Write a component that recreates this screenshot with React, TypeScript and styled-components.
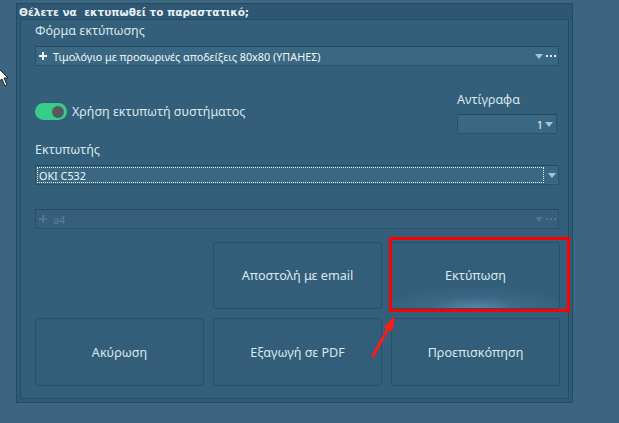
import React from 'react';
import styled, { createGlobalStyle } from 'styled-components';

const GlobalStyle = createGlobalStyle`
  html, body {
    margin: 0;
    padding: 0;
    background: #3c6580;
    font-family: "Noto Sans", "DejaVu Sans", sans-serif;
    color: #dde8ef;
  }
`;

const Page = styled.div`
  position: relative;
  width: 619px;
  height: 423px;
  overflow: hidden;
  padding: 3px 0 0 16px;
  box-sizing: border-box;
`;

const Window = styled.div`
  width: 557px;
  height: 400px;
  box-sizing: border-box;
  border: 1px solid #234b64;
  background: #305b76;
  display: flex;
  flex-direction: column;
`;

const TitleBar = styled.div`
  height: 15px;
  padding-left: 2px;
  display: flex;
  align-items: center;
  font-family: "DejaVu Sans", sans-serif;
  font-weight: bold;
  font-size: 10.5px;
  color: #e8f0f5;
  background: #2d5772;
  white-space: pre;
`;

const Panel = styled.div`
  flex: 1;
  margin: 0 3px 3px 3px;
  border: 1px solid #244c65;
  background: #335f7a;
  padding: 3px 9px 0 14px;
  display: flex;
  flex-direction: column;
`;

const Label = styled.div<{ $mt?: number }>`
  font-size: 12.5px;
  line-height: 16px;
  color: #dbe7ee;
  margin-top: ${p => p.$mt ?? 0}px;
`;

const Combo = styled.div<{ $disabled?: boolean; $mt: number }>`
  height: 20px;
  margin-top: ${p => p.$mt}px;
  box-sizing: border-box;
  border: 1px solid #2a516a;
  border-top-color: #23485f;
  background: ${p => (p.$disabled ? '#365f79' : '#3a6782')};
  display: flex;
  align-items: center;
  padding: 0 2px 0 3px;
  font-size: 10.8px;
  color: ${p => (p.$disabled ? '#5b8098' : '#f2f6f9')};
`;

const ComboText = styled.span`
  flex: 1;
  white-space: nowrap;
`;

const Ellipsis = styled.span<{ $disabled?: boolean }>`
  display: flex;
  align-items: center;
  gap: 2px;
  margin-left: 3px;
  i {
    display: block;
    width: 2px;
    height: 2px;
    background: ${p => (p.$disabled ? '#4e7791' : '#e6eef3')};
  }
`;

const Focus = styled.div`
  flex: 1;
  height: 16px;
  box-sizing: border-box;
  border: 1px dotted #e8eff4;
  display: flex;
  align-items: center;
  padding-left: 1px;
  margin: 0 4px 0 -2px;
`;

const Arrow = ({ color }: { color: string }) => (
  <svg width="8" height="5" viewBox="0 0 8 5">
    <path d="M0 0H8L4 5Z" fill={color} />
  </svg>
);

const PlusIcon = ({ color }: { color: string }) => (
  <svg width="8" height="8" viewBox="0 0 8 8" style={{ marginRight: 6, flexShrink: 0 }}>
    <path d="M3 0H5V3H8V5H5V8H3V5H0V3H3Z" fill={color} />
  </svg>
);

const OptionsRow = styled.div`
  display: flex;
  justify-content: space-between;
  align-items: flex-start;
  margin-top: 26px;
`;

const ToggleWrap = styled.div`
  display: flex;
  align-items: center;
  gap: 5px;
  margin-top: 11px;
`;

const Switch = styled.div`
  width: 32px;
  height: 17px;
  border-radius: 9px;
  background: #38cc8a;
  display: flex;
  align-items: center;
  justify-content: flex-end;
  padding-right: 3px;
  box-sizing: border-box;
`;

const Knob = styled.div`
  width: 12px;
  height: 12px;
  border-radius: 50%;
  background: #555a5e;
`;

const CopiesCol = styled.div`
  width: 100px;
  display: flex;
  flex-direction: column;
  gap: 6px;
  margin-right: 2px;
`;

const Spinner = styled.div`
  height: 20px;
  box-sizing: border-box;
  border: 1px solid #2a516a;
  border-top-color: #23485f;
  background: #3a6782;
  display: flex;
  align-items: center;
  justify-content: flex-end;
  gap: 2px;
  padding-right: 3px;
  font-size: 11px;
  color: #f2f6f9;
`;

const Grid = styled.div`
  display: grid;
  grid-template-columns: repeat(3, 169px);
  grid-template-rows: 67px 68px;
  gap: 9px;
  margin-top: 13px;
`;

const Button = styled.div<{ $glow?: boolean }>`
  position: relative;
  border: 1px solid #284f68;
  border-radius: 3px;
  background: ${p =>
    p.$glow
      ? 'radial-gradient(ellipse 60% 35% at 50% 100%, #5488a3 0%, #3c6985 45%, #325e79 100%)'
      : '#325e79'};
  display: flex;
  align-items: center;
  justify-content: center;
  font-size: 12.6px;
  color: #dde8ef;
`;

const Highlight = styled.div`
  position: absolute;
  inset: -6px -11px -4px -3px;
  border: 3px solid #ff0000;
  pointer-events: none;
`;

const Overlay = styled.svg`
  position: absolute;
  left: 0;
  top: 0;
  pointer-events: none;
`;

export default function App() {
  return (
    <>
      <GlobalStyle />
      <Page>
        <Window>
          <TitleBar>{'Θέλετε να  εκτυπωθεί το παραστατικό;'}</TitleBar>
          <Panel>
            <Label>Φόρμα εκτύπωσης</Label>
            <Combo $mt={7}>
              <PlusIcon color="#f2f6f9" />
              <ComboText>Τιμολόγιο με προσωρινές αποδείξεις 80x80 (ΥΠΑΗΕΣ)</ComboText>
              <Arrow color="#9cc6de" />
              <Ellipsis><i /><i /><i /></Ellipsis>
            </Combo>

            <OptionsRow>
              <ToggleWrap>
                <Switch><Knob /></Switch>
                <Label>Χρήση εκτυπωτή συστήματος</Label>
              </ToggleWrap>
              <CopiesCol>
                <Label>Αντίγραφα</Label>
                <Spinner>1 <Arrow color="#9cc6de" /></Spinner>
              </CopiesCol>
            </OptionsRow>

            <Label $mt={8}>Εκτυπωτής</Label>
            <Combo $mt={7}>
              <Focus>OKI C532</Focus>
              <Arrow color="#9cc6de" />
            </Combo>

            <Combo $disabled $mt={24}>
              <PlusIcon color="#4e7791" />
              <ComboText>a4</ComboText>
              <Arrow color="#4c7690" />
              <Ellipsis $disabled><i /><i /><i /></Ellipsis>
            </Combo>

            <Grid>
              <div />
              <Button>Αποστολή με email</Button>
              <Button $glow>
                Εκτύπωση
                <Highlight />
              </Button>
              <Button>Ακύρωση</Button>
              <Button>Εξαγωγή σε PDF</Button>
              <Button>Προεπισκόπηση</Button>
            </Grid>
          </Panel>
        </Window>

        <Overlay width="619" height="423" viewBox="0 0 619 423">
          {/* red annotation arrow */}
          <line x1="373" y1="356" x2="389" y2="327" stroke="#ff1a1a" strokeWidth="3" strokeLinecap="round" />
          <path d="M394 318 L385 327 L392 330 Z" fill="#ff1a1a" stroke="#ff1a1a" strokeWidth="1.5" strokeLinejoin="round" />
          {/* mouse cursor */}
          <path d="M-2 68 L8 78 L4 78 L7 85 L5 86 L2 79 L-2 82 Z" fill="#ffffff" stroke="#000000" strokeWidth="0.8" />
        </Overlay>
      </Page>
    </>
  );
}
